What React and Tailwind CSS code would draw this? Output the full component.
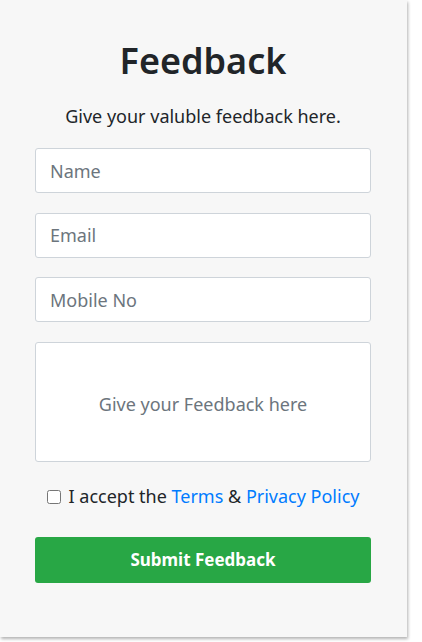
import React, { useState } from 'react';

const inputCls =
  'block w-full h-[45px] px-[14px] bg-white border border-[#ced4da] rounded-[3px] text-[18px] text-[#495057] placeholder:text-[#6c757d] outline-none';

export default function App() {
  const [form, setForm] = useState({ name: '', email: '', mobile: '', feedback: '', accept: false });

  const update = (key) => (e) =>
    setForm({ ...form, [key]: e.target.type === 'checkbox' ? e.target.checked : e.target.value });

  return (
    <div className="min-h-screen bg-white font-['Noto_Sans',sans-serif] text-[#212529]">
      <div className="w-[407px] h-[637px] bg-[#f7f7f7] shadow-[1px_2px_3px_rgba(0,0,0,0.3)] pl-[35px] pr-[36px] pt-[37px]">
        <h1 className="text-center text-[36px] font-semibold leading-[48px]">Feedback</h1>
        <p className="text-center text-[18px] mt-[18px] leading-[26px]">Give your valuble feedback here.</p>

        <form className="mt-[19px] flex flex-col gap-[19.5px]" onSubmit={(e) => e.preventDefault()}>
          <input className={inputCls} placeholder="Name" value={form.name} onChange={update('name')} />
          <input className={inputCls} placeholder="Email" value={form.email} onChange={update('email')} />
          <input className={inputCls} placeholder="Mobile No" value={form.mobile} onChange={update('mobile')} />
          <textarea
            className="block w-full h-[120px] px-[14px] pt-[48px] resize-none bg-white border border-[#ced4da] rounded-[3px] text-[18px] text-center text-[#495057] placeholder:text-[#6c757d] outline-none"
            placeholder="Give your Feedback here"
            value={form.feedback}
            onChange={update('feedback')}
          />

          <label className="flex items-center justify-center gap-[8px] text-[18px] mt-[2px]">
            <input type="checkbox" className="w-[14px] h-[14px]" checked={form.accept} onChange={update('accept')} />
            <span>
              I accept the <a href="#" className="text-[#007bff]">Terms</a> &amp;{' '}
              <a href="#" className="text-[#007bff]">Privacy Policy</a>
            </span>
          </label>

          <button
            type="submit"
            className="mt-[7px] h-[46px] w-full bg-[#28a745] text-white text-[17px] font-bold rounded-[3px]"
          >
            Submit Feedback
          </button>
        </form>
      </div>
    </div>
  );
}
